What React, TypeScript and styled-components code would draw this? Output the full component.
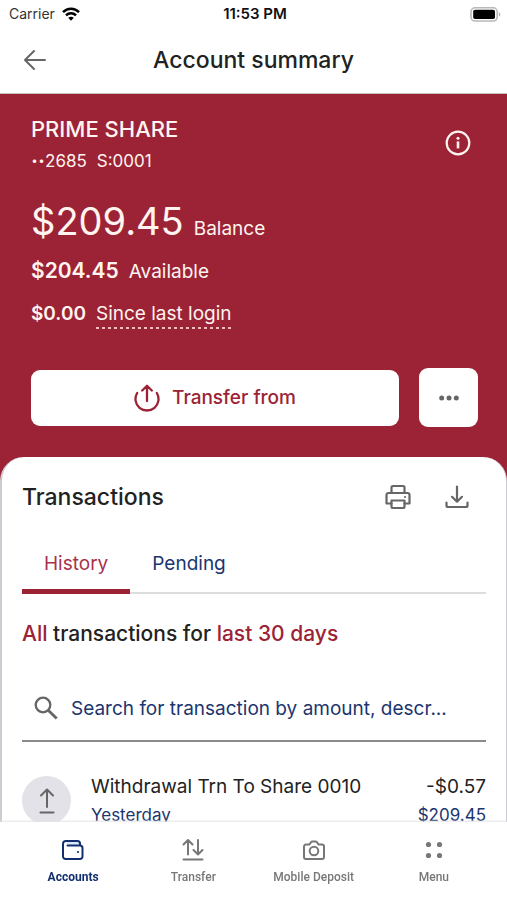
import React from "react";
import styled, { createGlobalStyle } from "styled-components";

const red = "#9b2335";
const navy = "#1b356e";
const ink = "#222222";
const grey = "#666666";

const GlobalStyle = createGlobalStyle`
  *, *::before, *::after { box-sizing: border-box; }
  body {
    margin: 0;
    background: #ffffff;
    color: ${ink};
    font-family: Inter, "Liberation Sans", sans-serif;
  }
  h1, h2, h3, p, ul, dl, dd { margin: 0; padding: 0; }
  button, input { font: inherit; color: inherit; }
  svg { display: block; flex: none; }
`;

const Screen = styled.div`
  display: flex;
  flex-direction: column;
  height: 100vh;
`;

const StatusBar = styled.div`
  display: grid;
  grid-template-columns: 1fr auto 1fr;
  align-items: center;
  height: 28px;
  padding: 0 6px 0 9px;
  font-size: 14px;
  line-height: 20px;
`;

const Carrier = styled.span`
  display: flex;
  align-items: center;
  gap: 7px;
  color: #333333;
`;

const Clock = styled.time`
  color: #111111;
  font-size: 15px;
  font-weight: 600;
`;

const Battery = styled.span`
  justify-self: end;
`;

const Header = styled.header`
  display: grid;
  grid-template-columns: 48px 1fr 48px;
  align-items: center;
  height: 66px;
  padding: 0 11px 2px;
  border-bottom: 1px solid #c9c0c2;
`;

const Title = styled.h1`
  text-align: center;
  font-size: 23px;
  line-height: 32px;
  font-weight: 500;
`;

const IconButton = styled.button<{ $color?: string }>`
  display: grid;
  place-items: center;
  width: 48px;
  height: 48px;
  padding: 0;
  border: 0;
  background: none;
  color: ${(p) => p.$color ?? grey};
  cursor: pointer;
`;

const Content = styled.main`
  flex: 1;
  min-height: 0;
  overflow-y: auto;
  scrollbar-width: none;
  background: ${red};
`;

const Account = styled.section`
  padding: 21px 29px 30px 31px;
  color: #fff4f0;
`;

const AccountTop = styled.div`
  display: flex;
  justify-content: space-between;
  align-items: center;
  margin-right: -4px;
`;

const AccountName = styled.h2`
  font-size: 22px;
  line-height: 28px;
  font-weight: 500;
`;

const AccountNumber = styled.p`
  display: flex;
  gap: 10px;
  padding-top: 8px;
  font-size: 17px;
  line-height: 20px;
`;

const MaskedNumber = styled.span`
  display: flex;
  align-items: center;
`;

const MaskDots = styled.span`
  font-size: 22px;
  font-weight: 600;
`;

const Amounts = styled.dl`
  display: flex;
  flex-direction: column;
  gap: 10px;
  padding-top: 26px;
`;

const AmountRow = styled.div`
  display: flex;
  flex-direction: row-reverse;
  justify-content: flex-end;
  align-items: baseline;
  gap: 10px;
`;

const AmountLabel = styled.dt<{ $dashed?: boolean }>`
  font-size: 19px;
  line-height: ${(p) => (p.$dashed ? 28 : 32)}px;
  padding-bottom: ${(p) => (p.$dashed ? 1 : 0)}px;
  background: ${(p) =>
    p.$dashed
      ? "repeating-linear-gradient(90deg, #efbcbf 0 3px, transparent 3px 6px) bottom / 100% 2px no-repeat"
      : "none"};
`;

const Amount = styled.dd<{ $size: "large" | "medium" | "small" }>`
  font-size: ${(p) => ({ large: 38, medium: 21, small: 19 })[p.$size]}px;
  line-height: ${(p) => (p.$size === "large" ? 48 : 32)}px;
  font-weight: ${(p) => (p.$size === "large" ? 400 : 600)};
`;

const Actions = styled.div`
  display: flex;
  align-items: center;
  gap: 20px;
  padding-top: 38px;
`;

const ActionButton = styled.button<{ $square?: boolean }>`
  display: flex;
  align-items: center;
  justify-content: center;
  gap: 12px;
  flex: ${(p) => (p.$square ? "0 0 59px" : "1")};
  height: ${(p) => (p.$square ? 59 : 56)}px;
  padding: 0;
  border: 0;
  border-radius: 9px;
  background: #ffffff;
  color: ${(p) => (p.$square ? grey : red)};
  font-size: 19px;
  font-weight: 500;
  cursor: pointer;
`;

const Sheet = styled.section`
  min-height: 365px;
  padding: 16px 20px 0 20px;
  border: solid #cdccd2;
  border-width: 0 1px 0 2px;
  border-radius: 24px 24px 0 0;
  background: #ffffff;
`;

const SheetHeader = styled.div`
  display: flex;
  align-items: center;
  justify-content: space-between;
  height: 48px;
  margin-right: 5px;
`;

const SheetTitle = styled.h2`
  font-size: 23px;
  line-height: 32px;
  font-weight: 500;
`;

const IconGroup = styled.div`
  display: flex;
  gap: 11px;
`;

const Tabs = styled.div`
  display: flex;
  margin-top: 19px;
  box-shadow: inset 0 -2px #dddddd;
`;

const Tab = styled.button<{ $active?: boolean }>`
  height: 54px;
  padding: 0 22px 1px;
  border: 0;
  border-bottom: 5px solid ${(p) => (p.$active ? red : "transparent")};
  background: none;
  color: ${(p) => (p.$active ? "#a8324a" : navy)};
  font-size: 19px;
  line-height: 24px;
  cursor: pointer;
`;

const Filter = styled.p`
  padding-top: 24px;
  font-size: 21px;
  line-height: 32px;
  font-weight: 500;
`;

const FilterLink = styled.a`
  color: ${red};
  text-decoration: none;
`;

const SearchBox = styled.label`
  display: flex;
  align-items: center;
  gap: 13px;
  height: 66px;
  margin-top: 26px;
  padding-left: 12px;
  border-bottom: 2px solid #8b8b8b;
  color: ${grey};
`;

const SearchInput = styled.input`
  flex: 1;
  min-width: 0;
  height: 40px;
  padding: 0;
  border: 0;
  outline: 0;
  background: none;
  font-size: 19px;
  color: ${navy};
  &::placeholder { color: ${navy}; opacity: 1; }
`;

const TransactionList = styled.ul`
  list-style: none;
  padding-top: 31px;
`;

const Transaction = styled.li`
  display: flex;
  align-items: flex-start;
  padding-bottom: 8px;
`;

const TransactionIcon = styled.span`
  display: grid;
  place-items: center;
  flex: none;
  width: 49px;
  height: 49px;
  margin: 3px 20px 0 0;
  border-radius: 50%;
  background: #e3e2e8;
  color: ${grey};
`;

const TransactionText = styled.div<{ $end?: boolean }>`
  flex: ${(p) => (p.$end ? "none" : "1")};
  text-align: ${(p) => (p.$end ? "right" : "left")};
`;

const Primary = styled.p`
  font-size: 19px;
  line-height: 28px;
`;

const Secondary = styled.p`
  font-size: 17px;
  line-height: 28px;
  color: ${navy};
`;

const BottomNav = styled.nav`
  display: grid;
  grid-template-columns: repeat(4, 1fr);
  flex: none;
  height: 78px;
  padding: 16px 13px 0;
  box-shadow: 0 -1px 2px #e2e2e2;
  background: #ffffff;
  z-index: 1;
`;

const NavLink = styled.a<{ $active?: boolean }>`
  display: flex;
  flex-direction: column;
  align-items: center;
  gap: 5px;
  color: ${(p) => (p.$active ? "#12306f" : "#777777")};
  font-family: Roboto, "Liberation Sans", sans-serif;
  font-size: 12px;
  line-height: 20px;
  font-weight: ${(p) => (p.$active ? 700 : 500)};
  text-decoration: none;
  white-space: nowrap;
`;

const stroke = {
  fill: "none",
  stroke: "currentColor",
  strokeWidth: 2,
  strokeLinecap: "round",
  strokeLinejoin: "round",
} as const;

const WifiIcon = () => (
  <svg width="18" height="14" viewBox="0 0 18 14" fill="none" stroke="#000000" strokeWidth="2.6" aria-hidden="true">
    <path d="M1 5.2C5.5.6 12.5.6 17 5.2" />
    <path d="M4 8.4C6.8 5.6 11.2 5.6 14 8.4" />
    <path d="M9 13.8 6.2 10.8Q9 8.6 11.8 10.8Z" fill="#000000" stroke="none" />
  </svg>
);

const BatteryIcon = () => (
  <svg width="31" height="15" viewBox="0 0 31 15" role="img" aria-label="Battery full">
    <rect x="1" y=".8" width="26.2" height="13.2" rx="4" fill="#ffffff" stroke="#b9b9b9" strokeWidth="1.6" />
    <rect x="3.2" y="2.8" width="21.8" height="9.2" rx="1.8" fill="#000000" />
    <path d="M28.8 5.2q1.7.6 1.7 2.2t-1.7 2.2z" fill="#b9b9b9" />
  </svg>
);

const BackIcon = () => (
  <svg width="24" height="24" viewBox="0 0 24 24" {...stroke} aria-hidden="true">
    <path d="M22 12H2M11 3 2 12l9 9" />
  </svg>
);

const InfoIcon = () => (
  <svg width="26" height="26" viewBox="0 0 26 26" aria-hidden="true">
    <circle cx="13" cy="13" r="11.3" fill="none" stroke="currentColor" strokeWidth="2.2" />
    <circle cx="13" cy="8.3" r="1.5" fill="currentColor" />
    <path d="M13 11.4v7" stroke="currentColor" strokeWidth="2.6" />
  </svg>
);

const TransferFromIcon = () => (
  <svg width="26" height="28" viewBox="0 0 26 28" {...stroke} strokeWidth={2.3} aria-hidden="true">
    <path d="M3.2 9A11.5 11.5 0 1 0 22.8 9M13 17V1.800M8.200 6.500 13 1.800l4.800 4.700" />
  </svg>
);

const MoreIcon = () => (
  <svg width="20" height="6" viewBox="0 0 20 6" fill="currentColor" aria-hidden="true">
    <circle cx="2.7" cy="3" r="2.5" />
    <circle cx="10" cy="3" r="2.5" />
    <circle cx="17.3" cy="3" r="2.5" />
  </svg>
);

const PrintIcon = () => (
  <svg width="26" height="26" viewBox="0 0 26 26" {...stroke} strokeWidth={2.2} aria-hidden="true">
    <path d="M6.500 9V3.500A1.500 1.500 0 0 1 8 2h10a1.500 1.500 0 0 1 1.500 1.500V9" />
    <path d="M6.500 19.500h-5V11a2 2 0 0 1 2-2h19a2 2 0 0 1 2 2v8.500h-5" />
    <path d="M6.500 16.500h13v6a1.500 1.500 0 0 1-1.500 1.500H8a1.500 1.500 0 0 1-1.500-1.500z" />
    <circle cx="20" cy="13" r=".4" fill="currentColor" strokeWidth="1.400" />
  </svg>
);

const DownloadIcon = () => (
  <svg width="24" height="24" viewBox="0 0 24 24" {...stroke} strokeWidth={2.2} aria-hidden="true">
    <path d="M12 1.500v15M7 11.800l5 4.900 5-4.900M1.500 17.500v3A1.500 1.500 0 0 0 3 22h18a1.500 1.500 0 0 0 1.500-1.500v-3" />
  </svg>
);

const SearchIcon = () => (
  <svg width="24" height="24" viewBox="0 0 24 24" fill="none" stroke="currentColor" strokeWidth="2.3" aria-hidden="true">
    <circle cx="9" cy="9" r="7.3" />
    <path d="m14.2 14.2 8.5 8.3" strokeWidth="2.8" />
  </svg>
);

const WithdrawalIcon = () => (
  <svg width="18" height="26" viewBox="0 0 18 26" {...stroke} aria-hidden="true">
    <path d="M9 19V1.500M3 7.500l6-6 6 6M2.500 24.500h13" />
  </svg>
);

const WalletIcon = () => (
  <svg width="24" height="24" viewBox="0 0 24 24" {...stroke} aria-hidden="true">
    <path d="M5 3h11.500A2.500 2.500 0 0 1 19 5.500V8H6.500z" fill="#dbe8fb" stroke="none" />
    <path d="M19 7.500V5.500A2.500 2.500 0 0 0 16.500 3H5a3 3 0 0 0-3 3v12.500A2.500 2.500 0 0 0 4.500 21H19a2.500 2.500 0 0 0 2.500-2.500V10A2.500 2.500 0 0 0 19 7.500H6.500" />
    <circle cx="17" cy="14" r="1.100" fill="currentColor" stroke="none" />
  </svg>
);

const TransferIcon = () => (
  <svg width="24" height="24" viewBox="0 0 24 24" {...stroke} aria-hidden="true">
    <path d="M7 16.500V2M2.500 6.500 7 2l4.500 4.500M17 2v14.500M12.500 12l4.500 4.500 4.500-4.500M2.500 21.500h19" />
  </svg>
);

const CameraIcon = () => (
  <svg width="24" height="24" viewBox="0 0 24 24" {...stroke} aria-hidden="true">
    <path d="M4 6.500h3.500L9 4.200a2 2 0 0 1 1.500-.7h3a2 2 0 0 1 1.500.7l1.500 2.300H20A2 2 0 0 1 22 8.500V19a2 2 0 0 1-2 2H4a2 2 0 0 1-2-2V8.500A2 2 0 0 1 4 6.500z" />
    <circle cx="12" cy="13" r="4.300" />
  </svg>
);

const MenuIcon = () => (
  <svg width="24" height="24" viewBox="0 0 24 24" fill="currentColor" aria-hidden="true">
    <circle cx="6.500" cy="6.500" r="2.600" />
    <circle cx="17.500" cy="6.500" r="2.600" />
    <circle cx="6.500" cy="17.500" r="2.600" />
    <circle cx="17.500" cy="17.500" r="2.600" />
  </svg>
);

const navItems = [
  { label: "Accounts", Icon: WalletIcon },
  { label: "Transfer", Icon: TransferIcon },
  { label: "Mobile Deposit", Icon: CameraIcon },
  { label: "Menu", Icon: MenuIcon },
];

export default function App() {
  return (
    <Screen>
      <GlobalStyle />
      <StatusBar>
        <Carrier>Carrier <WifiIcon /></Carrier>
        <Clock>11:53 PM</Clock>
        <Battery><BatteryIcon /></Battery>
      </StatusBar>
      <Header>
        <IconButton type="button" aria-label="Back"><BackIcon /></IconButton>
        <Title>Account summary</Title>
      </Header>
      <Content>
        <Account>
          <AccountTop>
            <div>
              <AccountName>PRIME SHARE</AccountName>
              <AccountNumber>
                <MaskedNumber><MaskDots>··</MaskDots>2685</MaskedNumber>
                <span>S:0001</span>
              </AccountNumber>
            </div>
            <IconButton type="button" aria-label="Account details" $color="#fff4f0"><InfoIcon /></IconButton>
          </AccountTop>
          <Amounts>
            <AmountRow>
              <AmountLabel>Balance</AmountLabel>
              <Amount $size="large">$209.45</Amount>
            </AmountRow>
            <AmountRow>
              <AmountLabel>Available</AmountLabel>
              <Amount $size="medium">$204.45</Amount>
            </AmountRow>
            <AmountRow>
              <AmountLabel $dashed>Since last login</AmountLabel>
              <Amount $size="small">$0.00</Amount>
            </AmountRow>
          </Amounts>
          <Actions>
            <ActionButton type="button"><TransferFromIcon />Transfer from</ActionButton>
            <ActionButton type="button" $square aria-label="More actions"><MoreIcon /></ActionButton>
          </Actions>
        </Account>
        <Sheet>
          <SheetHeader>
            <SheetTitle>Transactions</SheetTitle>
            <IconGroup>
              <IconButton type="button" aria-label="Print"><PrintIcon /></IconButton>
              <IconButton type="button" aria-label="Download"><DownloadIcon /></IconButton>
            </IconGroup>
          </SheetHeader>
          <Tabs role="tablist">
            <Tab type="button" role="tab" aria-selected="true" $active>History</Tab>
            <Tab type="button" role="tab" aria-selected="false">Pending</Tab>
          </Tabs>
          <Filter>
            <FilterLink href="#type">All</FilterLink> transactions for{" "}
            <FilterLink href="#period">last 30 days</FilterLink>
          </Filter>
          <SearchBox>
            <SearchIcon />
            <SearchInput type="text" aria-label="Search transactions" placeholder="Search for transaction by amount, descr..." />
          </SearchBox>
          <TransactionList>
            <Transaction>
              <TransactionIcon><WithdrawalIcon /></TransactionIcon>
              <TransactionText>
                <Primary>Withdrawal Trn To Share 0010</Primary>
                <Secondary>Yesterday</Secondary>
              </TransactionText>
              <TransactionText $end>
                <Primary>-$0.57</Primary>
                <Secondary>$209.45</Secondary>
              </TransactionText>
            </Transaction>
          </TransactionList>
        </Sheet>
      </Content>
      <BottomNav aria-label="Main">
        {navItems.map(({ label, Icon }, i) => (
          <NavLink key={label} href={`#${label.toLowerCase().replace(" ", "-")}`} $active={i === 0} aria-current={i === 0 ? "page" : undefined}>
            <Icon />
            {label}
          </NavLink>
        ))}
      </BottomNav>
    </Screen>
  );
}
